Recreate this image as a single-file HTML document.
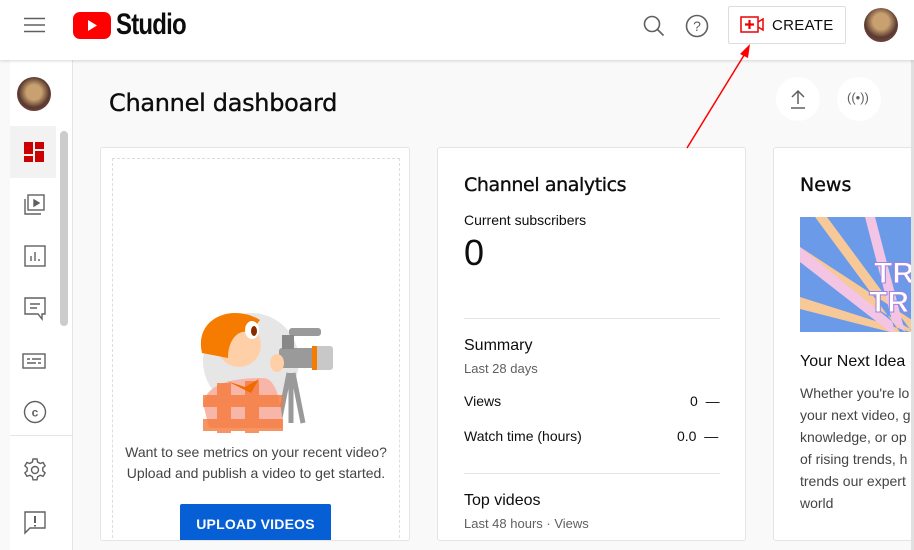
<!DOCTYPE html>
<html><head><style>
*{margin:0;padding:0;box-sizing:border-box}
body{width:914px;height:550px;overflow:hidden;background:#f9f9f9;font-family:"Liberation Sans",sans-serif;color:#0d0d0d;position:relative}
.hdr{position:absolute;left:0;top:0;width:914px;height:60px;background:#fff;box-shadow:0 1px 3px rgba(0,0,0,.15);z-index:2}
.side{position:absolute;left:10px;top:60px;width:63px;height:490px;background:#fff;border-right:1px solid #e5e5e5}
.card{position:absolute;background:#fff;border:1px solid #e5e5e5;border-radius:3px;top:147px;height:394px;overflow:hidden}
.t{position:absolute;white-space:nowrap}
.h{font-family:'DejaVu Sans',sans-serif;-webkit-text-stroke:.35px #0d0d0d}
</style></head><body>
<div class="hdr">
 <svg class="t" style="left:24px;top:17px" width="22" height="16"><path d="M0 1.5h21M0 8h21M0 14.5h21" stroke="#606060" stroke-width="1.6"/></svg>
 <svg class="t" style="left:73px;top:12px" width="38" height="27"><rect width="38" height="27" rx="7" fill="#f00"/><path d="M15 8l9 5.5-9 5.5z" fill="#fff"/></svg>
 <div class="t" style="left:116px;top:8px;font-size:30px;font-weight:bold;letter-spacing:-1px;transform:scaleX(.8);transform-origin:left">Studio</div>
 <svg class="t" style="left:642px;top:14px" width="24" height="24"><circle cx="10" cy="10" r="7.5" fill="none" stroke="#606060" stroke-width="1.6"/><path d="M15.5 15.5l6 6" stroke="#606060" stroke-width="1.6"/></svg>
 <svg class="t" style="left:685px;top:14px" width="24" height="24"><circle cx="12" cy="12" r="10.5" fill="none" stroke="#606060" stroke-width="1.6"/><text x="12" y="17" font-size="14" text-anchor="middle" fill="#606060" font-family="Liberation Sans">?</text></svg>
 <div class="t" style="left:728px;top:6px;width:118px;height:38px;border:1px solid #ddd;border-radius:2px"></div>
 <svg class="t" style="left:740px;top:16px" width="24" height="18"><rect x="1" y="1" width="17" height="15" fill="none" stroke="#e00" stroke-width="1.5"/><path d="M18 6l5-3v11l-5-3" fill="none" stroke="#e00" stroke-width="1.5"/><path d="M5 8.5h9M9.5 4v9" stroke="#e00" stroke-width="2.2"/></svg>
 <div class="t" style="left:772px;top:17px;font-size:15px;letter-spacing:.3px">CREATE</div>
 <div class="t" style="left:864px;top:8px;width:34px;height:34px;border-radius:50%;background:radial-gradient(circle at 50% 40%,#c9a070 0 30%,#5a3a30 60%,#8a4a50)"></div>
</div>
<svg class="t" style="left:680px;top:40px;z-index:3" width="80" height="112"><path d="M7 108L66 12" stroke="#f00" stroke-width="1.5"/><path d="M70 4l-10 10 8 4z" fill="#f00"/></svg>
<div class="side">
 <div class="t" style="left:7px;top:17px;width:34px;height:34px;border-radius:50%;background:radial-gradient(circle at 50% 45%,#c9a070 0 30%,#5a3a30 60%,#8a4a50)"></div>
 <div class="t" style="left:0;top:66px;width:46px;height:52px;background:#f2f2f2"></div>
 <svg class="t" style="left:14px;top:82px" width="22" height="22"><path d="M0 0h9v12H0zM11 0h9v7h-9zM11 9h9v11h-9zM0 14h9v6H0z" fill="#cc0000"/></svg>
 <svg class="t" style="left:13px;top:133px" width="24" height="24" fill="none" stroke="#606060" stroke-width="1.4"><rect x="5" y="2" width="16" height="15"/><path d="M2 6v15h16"/><path d="M11 7l5 3-5 3z" fill="#606060"/></svg>
 <svg class="t" style="left:14px;top:185px" width="22" height="22" fill="none" stroke="#606060" stroke-width="1.4"><rect x="1" y="1" width="20" height="20"/><path d="M7 16v-5M11 16V7M15 16v-2"/></svg>
 <svg class="t" style="left:14px;top:237px" width="22" height="24" fill="none" stroke="#606060" stroke-width="1.4"><path d="M1 1h20v16h-3v5l-4-5H1z"/><path d="M6 7h10M6 11h7"/></svg>
 <svg class="t" style="left:12px;top:293px" width="24" height="16" fill="none" stroke="#606060" stroke-width="1.4"><rect x="1" y="1" width="22" height="14"/><path d="M5 6h3M10 6h9M5 10h9M16 10h3"/></svg>
 <svg class="t" style="left:13px;top:340px" width="24" height="24" fill="none" stroke="#606060" stroke-width="1.4"><circle cx="12" cy="12" r="10.5"/><text x="12" y="16.5" font-size="12" text-anchor="middle" fill="#606060" stroke="none" font-family="Liberation Sans" font-weight="bold">c</text></svg>
 <div class="t" style="left:0;top:375px;width:62px;height:1px;background:#e5e5e5"></div>
 <svg class="t" style="left:13px;top:398px" width="24" height="24" fill="none" stroke="#606060" stroke-width="1.4"><circle cx="12" cy="12" r="3.5"/><path d="M10 1h4l.6 3 2.6 1.5 2.9-1 2 3.4-2.3 2v3l2.3 2-2 3.4-2.9-1-2.6 1.5-.6 3h-4l-.6-3-2.6-1.5-2.9 1-2-3.4 2.3-2v-3l-2.3-2 2-3.4 2.9 1L9.4 4z"/></svg>
 <svg class="t" style="left:14px;top:451px" width="22" height="24" fill="none" stroke="#606060" stroke-width="1.4"><path d="M1 1h20v16H6l-5 5z"/><path d="M11 5v7M11 14v1.5" stroke-width="2"/></svg>
 <div class="t" style="left:50px;top:71px;width:8px;height:195px;border-radius:4px;background:#ccc"></div>
</div>
<div class="t h" style="left:109px;top:89px;font-size:24px;letter-spacing:-.3px">Channel dashboard</div>
<div class="t" style="left:776px;top:77px;width:44px;height:44px;border-radius:50%;background:#fff"></div>
<svg class="t" style="left:789px;top:89px" width="18" height="20" fill="none" stroke="#606060" stroke-width="1.5"><path d="M9 15V2M3 8l6-6 6 6M2 19h14"/></svg>
<div class="t" style="left:837px;top:77px;width:44px;height:44px;border-radius:50%;background:#fff"></div>
<div class="t" style="left:847px;top:90px;font-size:13px;color:#606060">((•))</div>
<div class="card" style="left:100px;width:310px">
 <div class="t" style="left:11px;top:10px;width:288px;height:390px;border:1px dashed #ddd"></div>
 <svg class="t" style="left:96px;top:155px" width="140" height="130">
  <circle cx="54" cy="58" r="48" fill="#e6e6e6"/>
  <path d="M92 70l-10 50M94 70v50M96 70l10 50" stroke="#9a9a9a" stroke-width="5"/>
  <rect x="82" y="45" width="42" height="20" rx="3" fill="#9a9a9a"/><rect x="118" y="43" width="18" height="24" rx="3" fill="#c8c8c8"/><rect x="115" y="43" width="5" height="24" fill="#f57c00"/><rect x="92" y="25" width="32" height="8" rx="3" fill="#9a9a9a"/><rect x="85" y="32" width="12" height="14" fill="#888"/>
  <path d="M6 100c5-20 30-25 60-25 12 0 18 20 20 50H12z" fill="#f8b6a8"/>
  <path d="M20 80h14v50H20zM48 78h14v52H48zM6 92h80v12H6zM6 116h80v12H6z" fill="#f47a3c" opacity=".8"/>
  <path d="M30 78l18 6 14-8-8 14z" fill="#f06a00"/>
  <circle cx="42" cy="42" r="22" fill="#ffd0a8"/><path d="M5 50c-8-35 30-50 58-33l-10 13c-10-5-22 5-22 25z" fill="#f57c00"/><ellipse cx="55" cy="27" rx="7" ry="9" fill="#fff"/><ellipse cx="57" cy="28" rx="3" ry="5" fill="#8a2a00"/>
  <ellipse cx="80" cy="60" rx="7" ry="9" fill="#ffd0a8"/>
 </svg>
 <div class="t" style="left:0;width:310px;text-align:center;top:294px;font-size:14px;line-height:21px;color:#444">Want to see metrics on your recent video?<br>Upload and publish a video to get started.</div>
 <div class="t" style="left:79px;top:356px;width:151px;height:40px;background:#065fd4;color:#fff;font-size:14px;font-weight:bold;text-align:center;line-height:40px;border-radius:2px;letter-spacing:.2px">UPLOAD VIDEOS</div>
</div>
<div class="card" style="left:437px;width:309px">
 <div class="t h" style="left:26px;top:26px;font-size:19px;letter-spacing:-.4px">Channel analytics</div>
 <div class="t" style="left:26px;top:64px;font-size:14px">Current subscribers</div>
 <div class="t" style="left:26px;top:84px;font-size:36px">0</div>
 <div class="t" style="left:26px;top:170px;width:256px;height:1px;background:#e5e5e5"></div>
 <div class="t" style="left:26px;top:189px;font-size:16px">Summary</div>
 <div class="t" style="left:26px;top:213px;font-size:13px;color:#606060">Last 28 days</div>
 <div class="t" style="left:26px;top:245px;font-size:14px">Views</div>
 <div class="t" style="left:252px;top:245px;font-size:14px">0 &nbsp;—</div>
 <div class="t" style="left:26px;top:280px;font-size:14px">Watch time (hours)</div>
 <div class="t" style="left:239px;top:280px;font-size:14px">0.0 &nbsp;—</div>
 <div class="t" style="left:26px;top:325px;width:256px;height:1px;background:#e5e5e5"></div>
 <div class="t" style="left:26px;top:344px;font-size:16px">Top videos</div>
 <div class="t" style="left:26px;top:368px;font-size:13px;color:#606060">Last 48 hours · Views</div>
</div>
<div class="card" style="left:773px;width:145px">
 <div class="t h" style="left:26px;top:26px;font-size:19px">News</div>
 <svg class="t" style="left:26px;top:69px" width="115" height="115">
  <rect width="115" height="115" fill="#6a9ae8"/>
  <path d="M15 0h12l85 115H100zM0 30v15l115 70v-10zM0 80v12l90 23h20z" fill="#f7c898"/>
  <path d="M65 0h10l30 115H95zM0 30v15l90 70h15z" fill="#f4c4e4"/>
  <text x="74" y="66" font-size="30" font-weight="bold" fill="#fff" stroke="#a080e0" stroke-width="1" font-family="Liberation Sans">TR</text>
  <text x="69" y="95" font-size="30" font-weight="bold" fill="#fff" stroke="#a080e0" stroke-width="1" font-family="Liberation Sans">TR</text>
 </svg>
 <div class="t" style="left:26px;top:205px;font-size:16px">Your Next Idea</div>
 <div class="t" style="left:26px;top:234px;font-size:14px;line-height:22px;color:#444">Whether you're lo<br>your next video, g<br>knowledge, or op<br>of rising trends, h<br>trends our expert<br>world</div>
</div>
<div class="t" style="left:911px;top:60px;width:3px;height:490px;background:#e0e0e0"></div>
</body></html>
